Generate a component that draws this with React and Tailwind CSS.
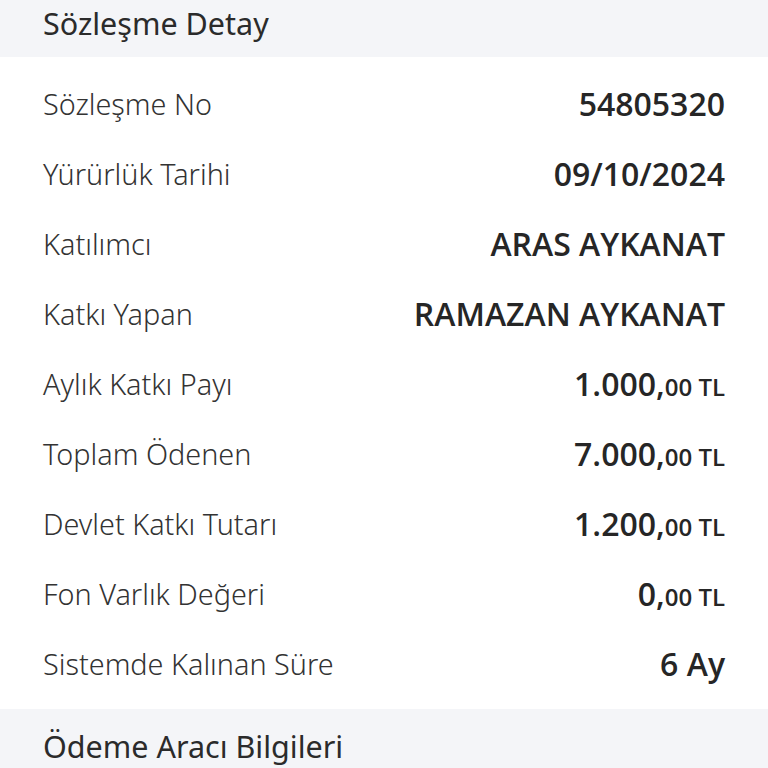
const rows = [
  { label: "Sözleşme No", value: "54805320" },
  { label: "Yürürlük Tarihi", value: "09/10/2024" },
  { label: "Katılımcı", value: "ARAS AYKANAT" },
  { label: "Katkı Yapan", value: "RAMAZAN AYKANAT" },
  { label: "Aylık Katkı Payı", amount: "1.000" },
  { label: "Toplam Ödenen", amount: "7.000" },
  { label: "Devlet Katkı Tutarı", amount: "1.200" },
  { label: "Fon Varlık Değeri", amount: "0" },
  { label: "Sistemde Kalınan Süre", value: "6 Ay" },
];

function SectionHeader({ title, className }) {
  return (
    <div className={"bg-[#f4f5f8] px-[43px] " + className}>
      <h2 className="text-[30.5px] leading-[1.15] font-normal text-[#2b2b2b] [font-family:'Noto_Sans',sans-serif]">
        {title}
      </h2>
    </div>
  );
}

function Row({ label, value, amount }) {
  return (
    <div className="flex h-[70px] items-center justify-between px-[43px]">
      <span className="text-[28.8px] font-light text-[#333] [font-family:'Noto_Sans',sans-serif]">
        {label}
      </span>
      {amount ? (
        <span className="font-semibold text-[#262626] [font-family:'Open_Sans',sans-serif]">
          <span className="text-[32px]">{amount},</span>
          <span className="text-[24px]">00 TL</span>
        </span>
      ) : (
        <span className="text-[32px] font-semibold text-[#262626] [font-family:'Open_Sans',sans-serif]">
          {value}
        </span>
      )}
    </div>
  );
}

export default function App() {
  return (
    <div className="h-[768px] w-[768px] overflow-hidden bg-white">
      <SectionHeader title="Sözleşme Detay" className="flex h-[57px] items-center pb-[9px]" />
      <div className="pt-[12px] pb-[10px]">
        {rows.map((r) => (
          <Row key={r.label} {...r} />
        ))}
      </div>
      <SectionHeader title="Ödeme Aracı Bilgileri" className="flex h-[59px] items-start pt-[20px]" />
    </div>
  );
}
